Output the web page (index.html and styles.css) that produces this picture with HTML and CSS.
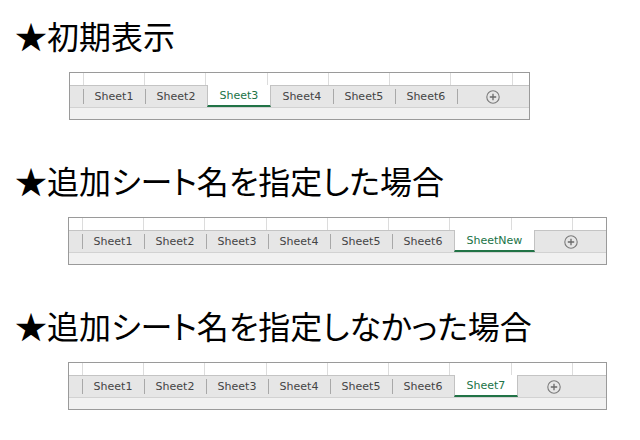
FILE: index.html
```html
<!DOCTYPE html>
<html lang="ja">
<head>
    <meta charset="UTF-8">
    <title>シート追加</title>
    <link rel="stylesheet" href="styles.css">
</head>
<body>
<div class="page">
    <!-- 初期表示 -->
    <section class="case">
        <h2 class="case-title">★初期表示</h2>
        <div class="sheet sheet-short">
            <div class="grid-row">
                <span class="cell head"></span>
                <span class="cell"></span><span class="cell"></span><span class="cell"></span><span class="cell"></span>
                <span class="cell"></span><span class="cell"></span><span class="cell"></span><span class="cell"></span>
            </div>
            <div class="tabbar">
                <span class="lead"></span>
                <span class="tab">Sheet1</span>
                <span class="tab">Sheet2</span>
                <span class="tab active">Sheet3</span>
                <span class="tab">Sheet4</span>
                <span class="tab">Sheet5</span>
                <span class="tab">Sheet6</span>
                <span class="add">
                    <svg width="14" height="14" viewBox="0 0 14 14"><circle cx="7" cy="7" r="6.2" fill="none" stroke="#7a7a7a" stroke-width="1.1"/><path d="M7 3.8v6.4M3.8 7h6.4" stroke="#6a6a6a" stroke-width="1.3"/></svg>
                </span>
            </div>
            <div class="strip"></div>
        </div>
    </section>

    <!-- 追加シート名を指定した場合 -->
    <section class="case">
        <h2 class="case-title">★追加シート名を指定した場合</h2>
        <div class="sheet">
            <div class="grid-row">
                <span class="cell head"></span>
                <span class="cell"></span><span class="cell"></span><span class="cell"></span><span class="cell"></span>
                <span class="cell"></span><span class="cell"></span><span class="cell"></span><span class="cell"></span>
                <span class="cell"></span>
            </div>
            <div class="tabbar">
                <span class="lead"></span>
                <span class="tab">Sheet1</span>
                <span class="tab">Sheet2</span>
                <span class="tab">Sheet3</span>
                <span class="tab">Sheet4</span>
                <span class="tab">Sheet5</span>
                <span class="tab">Sheet6</span>
                <span class="tab active">SheetNew</span>
                <span class="add">
                    <svg width="14" height="14" viewBox="0 0 14 14"><circle cx="7" cy="7" r="6.2" fill="none" stroke="#7a7a7a" stroke-width="1.1"/><path d="M7 3.8v6.4M3.8 7h6.4" stroke="#6a6a6a" stroke-width="1.3"/></svg>
                </span>
            </div>
            <div class="strip"></div>
        </div>
    </section>

    <!-- 追加シート名を指定しなかった場合 -->
    <section class="case">
        <h2 class="case-title">★追加シート名を指定しなかった場合</h2>
        <div class="sheet">
            <div class="grid-row">
                <span class="cell head"></span>
                <span class="cell"></span><span class="cell"></span><span class="cell"></span><span class="cell"></span>
                <span class="cell"></span><span class="cell"></span><span class="cell"></span><span class="cell"></span>
                <span class="cell"></span>
            </div>
            <div class="tabbar">
                <span class="lead"></span>
                <span class="tab">Sheet1</span>
                <span class="tab">Sheet2</span>
                <span class="tab">Sheet3</span>
                <span class="tab">Sheet4</span>
                <span class="tab">Sheet5</span>
                <span class="tab">Sheet6</span>
                <span class="tab active">Sheet7</span>
                <span class="add">
                    <svg width="14" height="14" viewBox="0 0 14 14"><circle cx="7" cy="7" r="6.2" fill="none" stroke="#7a7a7a" stroke-width="1.1"/><path d="M7 3.8v6.4M3.8 7h6.4" stroke="#6a6a6a" stroke-width="1.3"/></svg>
                </span>
            </div>
            <div class="strip"></div>
        </div>
    </section>
</div>
</body>
</html>
```

FILE: styles.css
```css
* {
    margin: 0;
    padding: 0;
    box-sizing: border-box;
}

body {
    background-color: #fff;
    font-family: "Noto Sans CJK JP", "Noto Sans", sans-serif;
}

.page {
    padding-top: 19px;
}

/* 見出し＋シート */
.case {
    height: 145px;
}

.case-title {
    font-size: 32px;
    font-weight: normal;
    line-height: 32px;
    color: #000;
    padding-left: 15px;
    margin-bottom: 21px;
    /* かなを詰める */
    font-feature-settings: "palt";
}

/* Excel風のシート領域 */
.sheet {
    width: 539px;
    margin-left: 68px;
    border: 1px solid #9a9a9a;
    overflow: hidden;
}

.sheet-short {
    width: 461px;
    margin-left: 69px;
}

/* 上のセル行 */
.grid-row {
    display: flex;
    height: 12px;
    background-color: #fff;
}

.cell {
    flex: none;
    width: 61.3px;
    border-right: 1px solid #dcdcdc;
}

.cell.head {
    width: 13.7px;
}

/* シート見出しバー */
.tabbar {
    display: flex;
    height: 23px;
    background-color: #e6e6e6;
    border-top: 1px solid #c4c4c4;
    border-bottom: 1px solid #d2d2d2;
    font-family: "DejaVu Sans", sans-serif;
    font-size: 11px;
    color: #444;
}

.lead {
    flex: none;
    width: 13px;
}

.tab {
    flex: none;
    min-width: 62px;
    padding: 0 11.5px;
    display: flex;
    align-items: center;
    justify-content: center;
    white-space: nowrap;
    /* 左の区切り線 */
    background: linear-gradient(#a8a8a8, #a8a8a8) left center / 1px 15px no-repeat;
}

.tab.active {
    margin-top: -1px;
    background: #fff;
    color: #217346;
    border-left: 1px solid #c2c2c2;
    border-right: 1px solid #c2c2c2;
    border-bottom: 2px solid #217346;
    padding-top: 1px;
}

.tab.active + .tab,
.tab.active + .add {
    background-image: none;
}

.add {
    flex: none;
    width: 72px;
    display: flex;
    align-items: center;
    justify-content: center;
    background: linear-gradient(#a8a8a8, #a8a8a8) left center / 1px 15px no-repeat;
}

.add svg {
    display: block;
}

/* 下の帯 */
.strip {
    height: 11px;
    background-color: #f1f1f1;
}
```
